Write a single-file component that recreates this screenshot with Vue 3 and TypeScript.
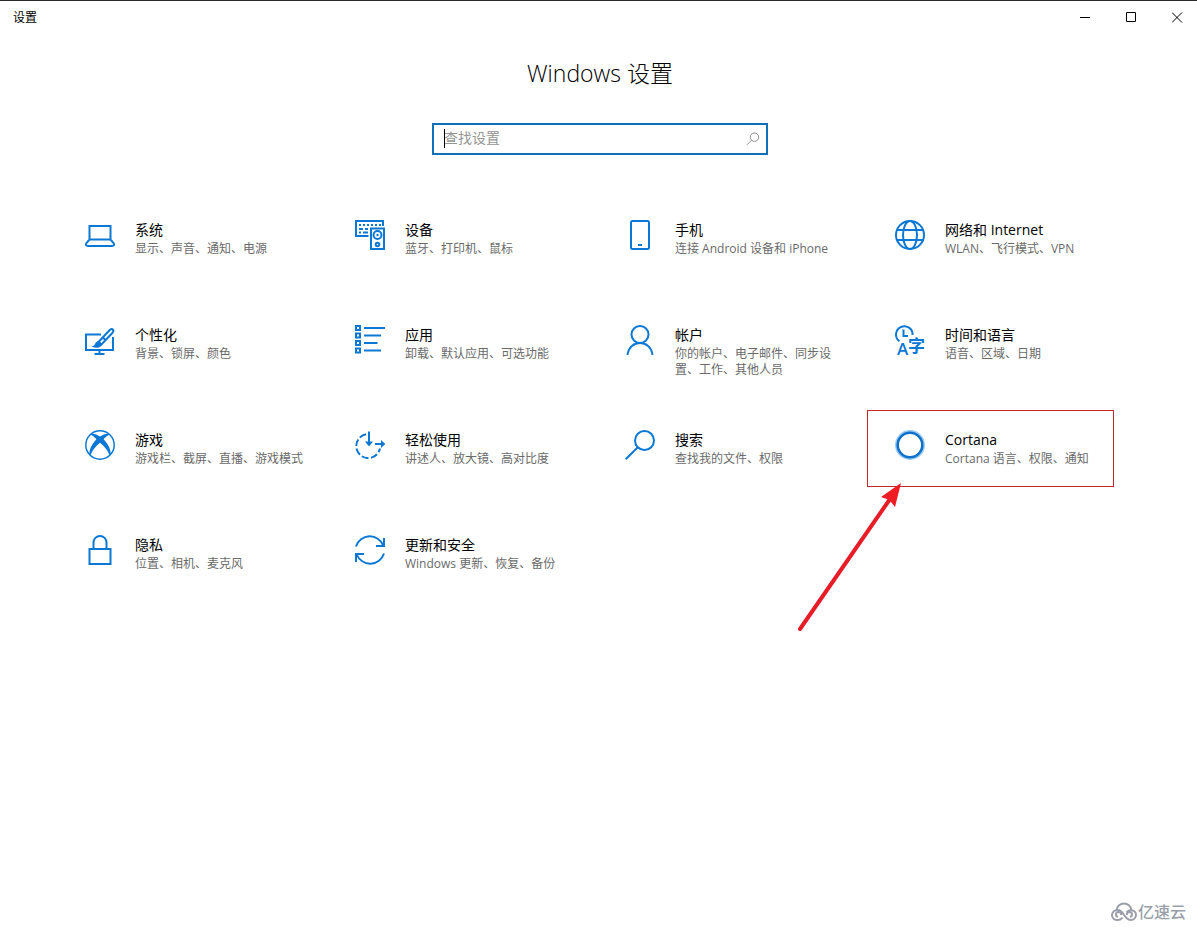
<script setup lang="ts">
interface Category {
  id: string
  title: string
  detail: string
  marked?: boolean
}

const categories: Category[] = [
  { id: 'system', title: '系统', detail: '显示、声音、通知、电源' },
  { id: 'devices', title: '设备', detail: '蓝牙、打印机、鼠标' },
  { id: 'phone', title: '手机', detail: '连接 Android 设备和 iPhone' },
  { id: 'network', title: '网络和 Internet', detail: 'WLAN、飞行模式、VPN' },
  { id: 'personal', title: '个性化', detail: '背景、锁屏、颜色' },
  { id: 'apps', title: '应用', detail: '卸载、默认应用、可选功能' },
  { id: 'accounts', title: '帐户', detail: '你的帐户、电子邮件、同步设置、工作、其他人员' },
  { id: 'time', title: '时间和语言', detail: '语音、区域、日期' },
  { id: 'gaming', title: '游戏', detail: '游戏栏、截屏、直播、游戏模式' },
  { id: 'ease', title: '轻松使用', detail: '讲述人、放大镜、高对比度' },
  { id: 'search', title: '搜索', detail: '查找我的文件、权限' },
  { id: 'cortana', title: 'Cortana', detail: 'Cortana 语言、权限、通知', marked: true },
  { id: 'privacy', title: '隐私', detail: '位置、相机、麦克风' },
  { id: 'update', title: '更新和安全', detail: 'Windows 更新、恢复、备份' },
]
</script>

<template>
  <div class="window">
    <header class="titlebar">
      <span class="caption">设置</span>
      <div class="controls">
        <button type="button" aria-label="最小化">
          <svg viewBox="0 0 11 11"><path d="M0 5.5H10" /></svg>
        </button>
        <button type="button" aria-label="最大化">
          <svg viewBox="0 0 11 11"><path d="M.5 .5H9.5V9.5H.5Z" /></svg>
        </button>
        <button type="button" aria-label="关闭">
          <svg viewBox="0 0 11 11"><path d="M0 .5L10 10.5M10 .5L0 10.5" /></svg>
        </button>
      </div>
    </header>

    <main>
      <h1>Windows 设置</h1>

      <form class="search" role="search" @submit.prevent>
        <input type="text" placeholder="查找设置" aria-label="查找设置" />
        <span class="caret"></span>
        <button type="submit" aria-label="搜索">
          <svg viewBox="0 0 14 14"><circle cx="8.5" cy="5.2" r="4.2" /><path d="M5.5 8.2L.8 12.9" /></svg>
        </button>
      </form>

      <nav class="grid" aria-label="设置类别">
        <a v-for="c in categories" :key="c.id" class="tile" :href="'#' + c.id">
          <svg class="icon" viewBox="0 0 30 30" aria-hidden="true">
            <g v-if="c.id === 'system'">
              <path d="M4.5 6H25.5V19.5H4.5ZM4.5 19.5L1.2 23.4Q.2 26 2.8 26H27.2Q29.8 26 28.8 23.4L25.5 19.5" />
            </g>
            <g v-else-if="c.id === 'devices'">
              <path d="M13.5 16H1V1H28V6" />
              <path d="M4 5H6M8 5H10M12 5H14M16 5H18M20 5H22M24 5H26M4 9H8M10 9H13M4 12.5H6M8 12.5H13" />
              <path d="M16 8.5H29V29H16Z" />
              <circle cx="22.5" cy="15" r="4" />
              <circle class="solid" cx="22.5" cy="15" r="1.2" />
              <circle cx="22.5" cy="24.5" r="1.8" />
            </g>
            <g v-else-if="c.id === 'phone'">
              <rect x="6" y="1" width="18" height="28" rx="1.5" />
              <path d="M13 25H17" />
            </g>
            <g v-else-if="c.id === 'network'">
              <circle cx="15" cy="15" r="14" />
              <ellipse cx="15" cy="15" rx="7" ry="14" />
              <path d="M2 10H28M2 20H28" />
            </g>
            <g v-else-if="c.id === 'personal'">
              <path d="M16 9.5H1V25H28V12M14.5 25V29M9.5 29H19.5" />
              <path d="M13.5 17L24.7 5Q26.8 3.3 28 4.7Q29 6 27.3 8L16.5 19.5ZM17.8 12.6L21.2 15.5" />
              <path class="solid" d="M14 16Q10.5 16.5 9.8 19.5Q9.2 21.5 6 21.5Q15.5 25 17.2 19Z" />
            </g>
            <g v-else-if="c.id === 'apps'">
              <path d="M1 1H5V5H1ZM1 8.5H5V12.5H1ZM1 16H5V20H1ZM1 23.5H5V27.5H1Z" />
              <path d="M9 3H30M9 10.5H26M9 18H22.5M9 25.5H26" />
            </g>
            <g v-else-if="c.id === 'accounts'">
              <circle cx="15" cy="9.5" r="8.5" />
              <path d="M2.5 30C3.5 22 9 18 15 18S26.5 22 27.5 30" />
            </g>
            <g v-else-if="c.id === 'time'">
              <path d="M4.5 16.3A8.3 8.3 0 1 1 17.6 10M8.5 4.5V11H13" />
              <text class="latin" x="2" y="30" font-size="17">A</text>
              <text x="13" y="27" font-size="17">字</text>
            </g>
            <g v-else-if="c.id === 'gaming'">
              <circle class="fine" cx="15" cy="15" r="14.2" />
              <path
                class="solid"
                d="M6.5 3.8Q10.5 3.2 15 6.5Q19.5 3.2 23.5 3.8L24.5 5Q22 5.2 18.6 9.2Q25.5 16.5 25.8 24L24.5 25.2Q22 18.5 15 12.8Q8 18.5 5.5 25.2L4.2 24Q4.5 16.5 11.4 9.2Q8 5.2 5.5 5Z"
              />
            </g>
            <g v-else-if="c.id === 'ease'">
              <path stroke-dasharray="7 2.5" d="M11 4.3A12 12 0 1 0 25 18.5" />
              <path d="M14 1.5V15M20 14H29" />
              <path class="solid" d="M10 11.5H18L14 16.5ZM26 10V18L30.3 14Z" />
            </g>
            <g v-else-if="c.id === 'search'">
              <circle cx="19.5" cy="10.5" r="9.5" />
              <path d="M12.8 17.2L.7 29.3" />
            </g>
            <g v-else-if="c.id === 'cortana'">
              <circle class="halo" cx="15" cy="15" r="13.5" />
              <circle class="ring" cx="15" cy="15" r="12.3" />
            </g>
            <g v-else-if="c.id === 'privacy'">
              <path d="M4.5 14H25.5V29H4.5ZM8.5 14V7.5A6.5 6.5 0 0 1 21.5 7.5V14" />
            </g>
            <g v-else>
              <path d="M1 11.5A14.5 14.5 0 0 1 28.3 10.5M29 3V11H21" />
              <path d="M29 18.5A14.5 14.5 0 0 1 1.7 19.5M1 27V19H9" />
            </g>
          </svg>
          <span class="text">
            <span class="title">{{ c.title }}</span>
            <span class="detail">{{ c.detail }}</span>
          </span>
          <template v-if="c.marked">
            <span class="frame"></span>
            <svg class="arrow" viewBox="0 0 108 152" aria-hidden="true">
              <path class="shaft" d="M4 147L94 17" />
              <path class="head" d="M105 1L85 15L93.5 18L99 25Z" />
            </svg>
          </template>
        </a>
      </nav>
    </main>

    <footer class="brand">
      <svg viewBox="0 0 26 20" aria-hidden="true">
        <path d="M5.5 8.5C6 4 9.5 1.5 13 1.5S20 4 20.5 8.5" />
        <path d="M15.5 10.5C17 8.5 18.5 8 20 8C23 8.5 25 10.5 25 13C25 16 22.5 18 20 18C16.5 18 15 15.5 13 13C11.5 10.5 9.5 8 6.5 8C3.5 8 1 10.5 1 13C1 16 3.5 18 6.5 18C9 18 10.5 17 11.5 15.5" />
        <path d="M10 13A2.5 2.5 0 1 0 7 15M16 13A2.5 2.5 0 1 1 19 15" />
      </svg>
      <span>亿速云</span>
    </footer>
  </div>
</template>

<style>
body {
  margin: 0;
  background: #fff;
}
</style>

<style scoped>
.window {
  display: flex;
  flex-direction: column;
  box-sizing: border-box;
  min-height: 100vh;
  border-top: 1px solid #2b2b2b;
  background: #fff;
  color: #000;
  font-family: "Open Sans", "Noto Sans CJK SC", sans-serif;
}
.titlebar {
  display: flex;
  align-items: center;
  justify-content: space-between;
  height: 32px;
  padding-left: 13px;
}
.caption {
  font-size: 12px;
  line-height: 18px;
  padding-top: 2px;
}
.controls {
  display: flex;
  height: 100%;
}
button {
  display: flex;
  align-items: center;
  padding: 0;
  border: 0;
  background: transparent;
}
.controls button {
  width: 46px;
  padding-left: 18px;
}
.controls button:last-child {
  width: 43px;
}
.controls svg {
  width: 11px;
  height: 11px;
  fill: none;
  stroke: #000;
}
main {
  display: flex;
  flex-direction: column;
  align-items: center;
  padding-left: 3px;
}
h1 {
  margin: 24px 0 34px;
  font-size: 23px;
  font-weight: 300;
  line-height: 32px;
}
.search {
  position: relative;
  display: flex;
  box-sizing: border-box;
  width: 336px;
  max-width: 90%;
  height: 32px;
  border: 2px solid #0e70b9;
}
.search input {
  flex: 1;
  min-width: 0;
  padding: 0 10px 2px;
  border: 0;
  outline: 0;
  background: transparent;
  color: #000;
  font: 14px/20px "Open Sans", "Noto Sans CJK SC", sans-serif;
}
.search input::placeholder {
  color: #959595;
  opacity: 1;
}
.caret {
  position: absolute;
  top: 4px;
  left: 10px;
  width: 1px;
  height: 19px;
  background: #000;
}
.search button {
  width: 20px;
}
.search button svg {
  width: 14px;
  height: 14px;
  fill: none;
  stroke: #8c8c8c;
}
.grid {
  display: grid;
  grid-template-columns: repeat(auto-fit, 270px);
  grid-auto-rows: minmax(77px, auto);
  row-gap: 28px;
  justify-content: center;
  align-self: stretch;
  padding: 45px 59px 28px 55px;
}
.tile {
  position: relative;
  display: flex;
  align-items: flex-start;
  gap: 20px;
  padding: 20px 24px 0 27px;
  color: inherit;
  text-decoration: none;
}
.icon {
  flex: none;
  width: 30px;
  height: 30px;
  overflow: visible;
  fill: none;
  stroke: #0a78d4;
  stroke-width: 2;
}
.icon text {
  fill: #0a78d4;
  stroke: none;
  font-weight: 700;
}
.icon .latin {
  font-weight: 600;
}
.icon .solid {
  fill: #0a78d4;
  stroke: none;
}
.icon .fine {
  stroke-width: 1.5;
}
.icon .halo {
  stroke: #9accf3;
  stroke-width: 3;
}
.icon .ring {
  stroke: #0e70c8;
  stroke-width: 2.5;
}
.text {
  display: flex;
  flex: 1;
  flex-direction: column;
  gap: 1px;
}
.title {
  font-size: 14px;
  line-height: 20px;
  white-space: nowrap;
}
.detail {
  color: #6a6a6a;
  font-size: 12px;
  line-height: 16px;
}
.frame {
  position: absolute;
  inset: 0 24px 0 -1px;
  border: 1px solid #c1272d;
}
.arrow {
  position: absolute;
  top: 72px;
  left: -72px;
  width: 108px;
  height: 152px;
}
.shaft {
  fill: none;
  stroke: #e81c27;
  stroke-width: 4;
  stroke-linecap: round;
}
.head {
  fill: #f01c24;
}
.brand {
  display: flex;
  align-items: center;
  justify-content: flex-end;
  gap: 1px;
  margin-top: auto;
  padding: 0 11px 9px;
  color: #9a9fa9;
  font-size: 16px;
  font-weight: 500;
  line-height: 24px;
}
.brand svg {
  width: 26px;
  height: 20px;
  fill: none;
  stroke: #9a9fa9;
  stroke-width: 2;
}
</style>
